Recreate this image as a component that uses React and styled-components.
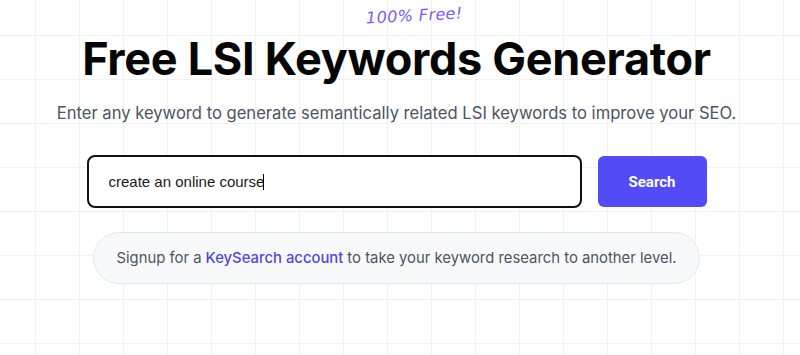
import React, { useState } from 'react';
import styled, { createGlobalStyle } from 'styled-components';

const GlobalStyle = createGlobalStyle`
  html, body {
    margin: 0;
    padding: 0;
    background: #ffffff;
  }
  body {
    font-family: Inter, "Noto Sans", sans-serif;
  }
`;

const Page = styled.div`
  width: 800px;
  height: 355px;
  overflow: hidden;
  box-sizing: border-box;
  padding: 5px 7px 0 0;
  display: flex;
  flex-direction: column;
  align-items: center;
  background-color: #ffffff;
  background-image:
    linear-gradient(to right, #f2f2f2 1px, transparent 1px),
    linear-gradient(to bottom, #f2f2f2 1px, transparent 1px);
  background-size: 44px 44px;
  background-position: 35px 35px;
`;

const Badge = styled.div`
  font-family: "DejaVu Sans", sans-serif;
  font-style: italic;
  font-size: 16px;
  letter-spacing: 0.4px;
  color: #7b5cf5;
  margin-left: 36px;
  transform: rotate(-3deg);
  line-height: 22px;
`;

const Title = styled.h1`
  margin: 5px 0 0;
  font-family: Inter, sans-serif;
  font-size: 45px;
  font-weight: 700;
  letter-spacing: -0.3px;
  color: #050505;
  line-height: 54px;
`;

const Subtitle = styled.p`
  margin: 15px 0 0;
  font-family: Inter, sans-serif;
  font-size: 16.6px;
  color: #4b5563;
  line-height: 24px;
`;

const SearchRow = styled.form`
  display: flex;
  gap: 16px;
  margin-top: 30px;
`;

const Field = styled.div`
  position: relative;
`;

const Input = styled.input`
  width: 495px;
  height: 53px;
  box-sizing: border-box;
  border: 2px solid #111;
  border-radius: 8px;
  padding: 0 20px;
  font-family: "Liberation Sans", Arial, sans-serif;
  font-size: 15px;
  color: #1a1a1a;
  background: #fff;
  outline: none;
  caret-color: #000;
`;

const Caret = styled.span`
  position: absolute;
  top: 19px;
  left: 176px;
  width: 1px;
  height: 16px;
  background: #000;
`;

const Button = styled.button`
  width: 109px;
  height: 51px;
  margin-top: 1px;
  border: none;
  border-radius: 6px;
  background: #524bf6;
  color: #fff;
  font-family: Roboto, Inter, sans-serif;
  font-size: 15px;
  font-weight: 700;
  cursor: pointer;
`;

const Notice = styled.div`
  margin-top: 24px;
  height: 52px;
  box-sizing: border-box;
  padding: 0 22px;
  display: flex;
  align-items: center;
  border: 1px solid #e6e8ec;
  border-radius: 26px;
  background: #f8f9fb;
  font-family: Inter, sans-serif;
  font-size: 14.85px;
  color: #4b5563;
`;

const Link = styled.a`
  color: #5046e5;
  font-weight: 500;
  text-decoration: none;
  margin: 0 4px;
`;

const App = () => {
  const [query, setQuery] = useState('create an online course');

  return (
    <>
      <GlobalStyle />
      <Page>
        <Badge>100% Free!</Badge>
        <Title>Free LSI Keywords Generator</Title>
        <Subtitle>
          Enter any keyword to generate semantically related LSI keywords to improve your SEO.
        </Subtitle>
        <SearchRow onSubmit={(e) => e.preventDefault()}>
          <Field>
            <Input
              type="text"
              value={query}
              onChange={(e) => setQuery(e.target.value)}
            />
            <Caret />
          </Field>
          <Button type="submit">Search</Button>
        </SearchRow>
        <Notice>
          Signup for a<Link href="#">KeySearch account</Link>to take your keyword research to another level.
        </Notice>
      </Page>
    </>
  );
};

export default App;
